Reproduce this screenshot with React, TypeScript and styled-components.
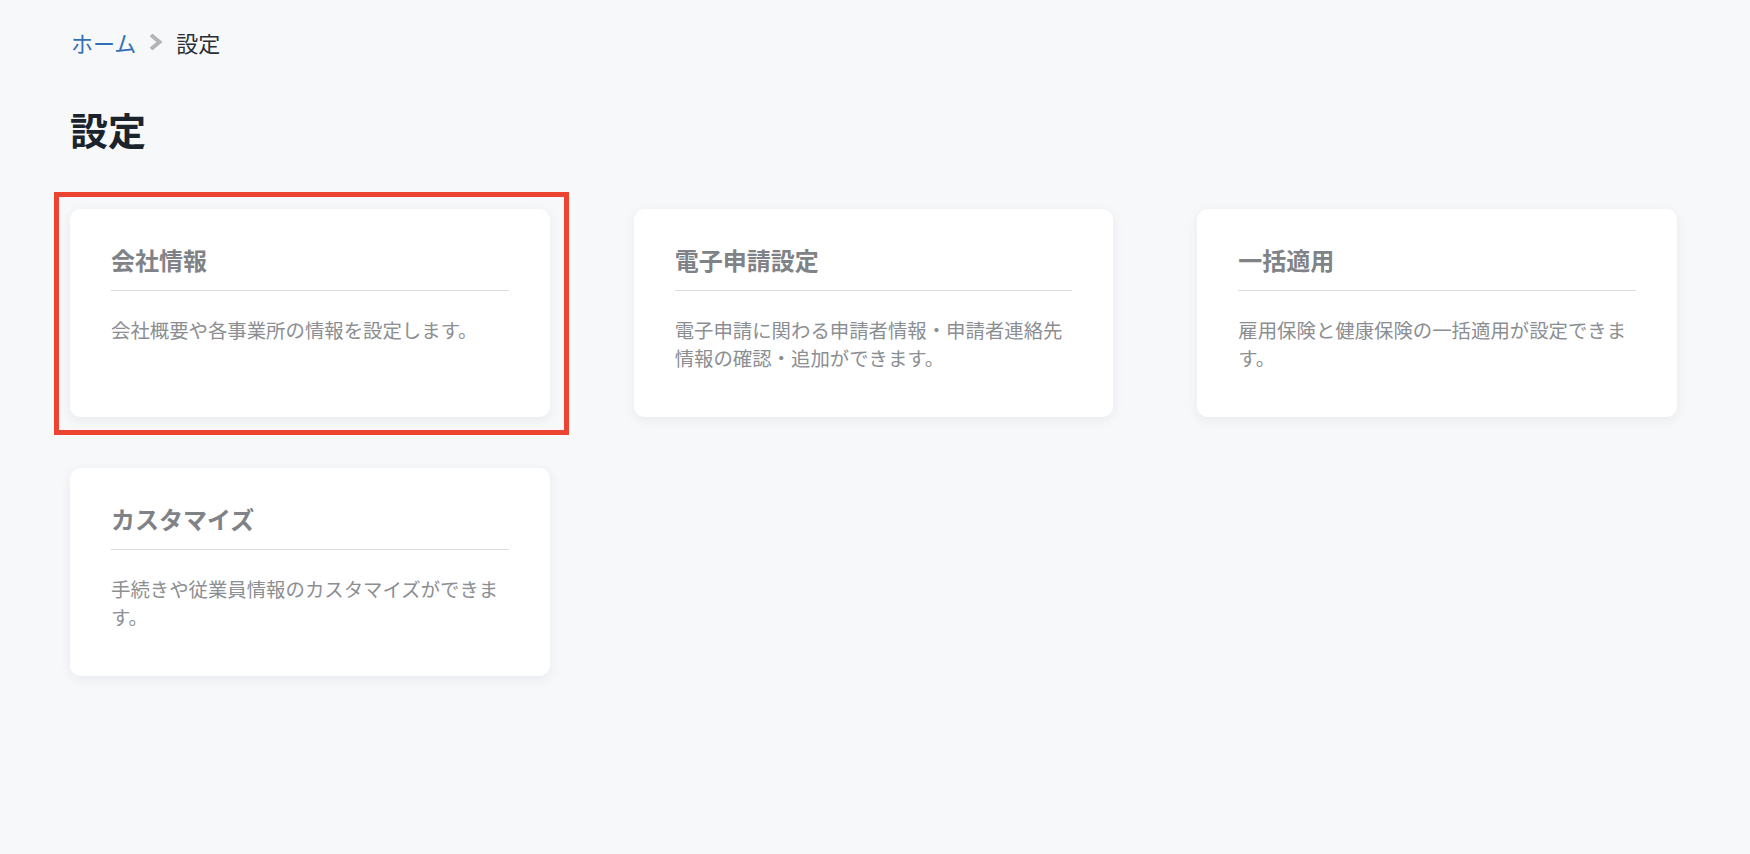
import React from "react";
import styled, { createGlobalStyle } from "styled-components";

const GlobalStyle = createGlobalStyle`
  html, body {
    margin: 0;
    padding: 0;
    background: #f7f8fa;
  }
  body {
    font-family: "Noto Sans CJK JP", "Noto Sans", sans-serif;
    color: #1c2630;
  }
  * { box-sizing: border-box; }
`;

const Page = styled.main`
  min-height: 854px;
  padding: 27px 73px 60px 70px;
`;

const Breadcrumb = styled.nav`
  display: flex;
  align-items: center;
  height: 30px;
  font-size: 22px;
  line-height: 30px;
  padding-left: 1px;
`;

const CrumbLink = styled.a`
  color: #3270b6;
  text-decoration: none;
  cursor: pointer;
`;

const CrumbSep = styled.span`
  display: inline-flex;
  align-items: center;
  margin: 0 13px 0 12px;
`;

const CrumbCurrent = styled.span`
  color: #2b2f33;
`;

const Title = styled.h1`
  margin: 48px 0 0;
  font-size: 38px;
  line-height: 48px;
  font-weight: 700;
  color: #1b242c;
`;

const Grid = styled.div`
  margin-top: 56px;
  display: grid;
  grid-template-columns: repeat(3, 1fr);
  column-gap: 84px;
  row-gap: 51px;
`;

const Card = styled.a<{ $highlighted?: boolean }>`
  position: relative;
  display: block;
  background: #ffffff;
  border-radius: 11px;
  padding: 35px 41px 45px 41px;
  box-shadow: 0 3px 12px rgba(30, 40, 60, 0.07);
  text-decoration: none;
  cursor: pointer;

  ${({ $highlighted }) =>
    $highlighted
      ? `
    &::after {
      content: "";
      position: absolute;
      top: -17px;
      left: -16px;
      right: -19px;
      bottom: -18px;
      border: 5px solid #ec4430;
      pointer-events: none;
    }
  `
      : ""}
`;

const CardTitle = styled.h2`
  margin: 0;
  padding-bottom: 14px;
  border-bottom: 1px solid #d8dde2;
  font-size: 24px;
  line-height: 32px;
  font-weight: 700;
  color: #7f8286;
`;

const CardText = styled.p`
  margin: 25px 0 0;
  font-size: 19.4px;
  line-height: 28px;
  color: #8b8e92;
`;

const Chevron = () => (
  <svg width="15" height="18" viewBox="0 0 15 18" fill="none">
    <polyline
      points="3,2 11.5,9 3,16"
      stroke="#b3b6b9"
      strokeWidth="4"
      strokeLinecap="butt"
      strokeLinejoin="miter"
    />
  </svg>
);

type Item = { title: string; text: string; highlighted?: boolean };

const items: Item[] = [
  { title: "会社情報", text: "会社概要や各事業所の情報を設定します。", highlighted: true },
  {
    title: "電子申請設定",
    text: "電子申請に関わる申請者情報・申請者連絡先情報の確認・追加ができます。",
  },
  { title: "一括適用", text: "雇用保険と健康保険の一括適用が設定できます。" },
  { title: "カスタマイズ", text: "手続きや従業員情報のカスタマイズができます。" },
];

export default function App() {
  return (
    <>
      <GlobalStyle />
      <Page>
        <Breadcrumb>
          <CrumbLink>ホーム</CrumbLink>
          <CrumbSep>
            <Chevron />
          </CrumbSep>
          <CrumbCurrent>設定</CrumbCurrent>
        </Breadcrumb>
        <Title>設定</Title>
        <Grid>
          {items.map((it) => (
            <Card key={it.title} $highlighted={it.highlighted}>
              <CardTitle>{it.title}</CardTitle>
              <CardText>{it.text}</CardText>
            </Card>
          ))}
        </Grid>
      </Page>
    </>
  );
}
